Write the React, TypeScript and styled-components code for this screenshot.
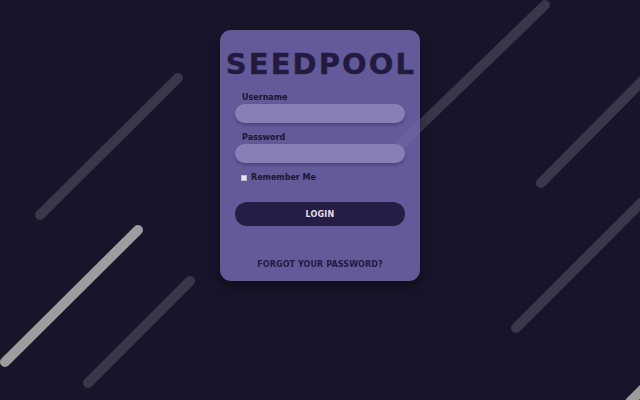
import React, { JSX } from 'react';
import styled, { createGlobalStyle } from 'styled-components';

const GlobalStyle = createGlobalStyle`
  html, body, #root {
    margin: 0;
    padding: 0;
    width: 100%;
    height: 100%;
  }
  body {
    background: #17152a;
    font-family: "DejaVu Sans", "Liberation Sans", sans-serif;
    overflow: hidden;
  }
`;

const Page = styled.div`
  position: relative;
  width: 640px;
  height: 400px;
  display: flex;
  justify-content: center;
  align-items: flex-start;
  padding-top: 30px;
  box-sizing: border-box;
`;

const Streaks = styled.svg`
  position: absolute;
  inset: 0;
  width: 640px;
  height: 400px;
`;

const Card = styled.form`
  position: relative;
  width: 200px;
  height: 251px;
  box-sizing: border-box;
  padding: 16px 15px 0;
  border-radius: 11px;
  background: rgba(117, 107, 181, 0.8);
  box-shadow: 0 5px 12px rgba(0, 0, 0, 0.45);
  display: flex;
  flex-direction: column;
`;

const Title = styled.h1`
  margin: 0 -15px 11px;
  padding-left: 2px;
  font-size: 29px;
  line-height: 36px;
  font-weight: 700;
  letter-spacing: 2.1px;
  text-align: center;
  color: #231a40;
  -webkit-text-stroke: 0.4px #231a40;
  white-space: nowrap;
`;

const Label = styled.label`
  display: block;
  padding-left: 7px;
  font-size: 8px;
  line-height: 10px;
  font-weight: 700;
  color: #1c1533;
`;

const Input = styled.input`
  display: block;
  width: 100%;
  height: 19px;
  box-sizing: border-box;
  margin: 1px 0 10px;
  border: none;
  outline: none;
  border-radius: 10px;
  background: #897fb6;
  box-shadow: 0 2px 3px rgba(20, 14, 40, 0.3);
`;

const CheckRow = styled.label`
  display: flex;
  align-items: center;
  gap: 4px;
  padding-left: 6px;
  font-size: 8px;
  line-height: 10px;
  font-weight: 700;
  color: #1c1533;
`;

const Box = styled.span`
  width: 6px;
  height: 6px;
  background: #e6e4ec;
  border: 0.5px solid #bdb8cc;
  box-sizing: border-box;
`;

const LoginButton = styled.button`
  margin-top: 19px;
  height: 24px;
  width: 100%;
  border: none;
  border-radius: 12px;
  background: #261d47;
  color: #e2deef;
  font-family: inherit;
  font-size: 8px;
  font-weight: 700;
  letter-spacing: 0.2px;
`;

const Forgot = styled.a`
  margin-top: 34px;
  text-align: center;
  font-size: 8px;
  line-height: 10px;
  font-weight: 700;
  letter-spacing: 0.1px;
  color: #231a40;
`;

type TStreak = { x1: number; y1: number; x2: number; y2: number; color: string };

const streaks: TStreak[] = [
  { x1: 40, y1: 215, x2: 178, y2: 78, color: '#3a3848' },
  { x1: 5, y1: 362, x2: 138, y2: 230, color: '#9d9d9d' },
  { x1: 88, y1: 383, x2: 190, y2: 281, color: '#3a3848' },
  { x1: 545, y1: 5, x2: 395, y2: 150, color: '#3a3848' },
  { x1: 541, y1: 183, x2: 645, y2: 78, color: '#3a3848' },
  { x1: 516, y1: 328, x2: 645, y2: 199, color: '#3a3848' },
  { x1: 630, y1: 402, x2: 645, y2: 387, color: '#9d9d9d' },
];

function App(): JSX.Element {
  return (
    <>
      <GlobalStyle />
      <Page>
        <Streaks viewBox="0 0 640 400">
          {streaks.map((s, i) =>
            <line key={i} x1={s.x1} y1={s.y1} x2={s.x2} y2={s.y2}
              stroke={s.color} strokeWidth={10} strokeLinecap="round" />
          )}
        </Streaks>
        <Card onSubmit={(e) => e.preventDefault()}>
          <Title>SEEDPOOL</Title>
          <Label>Username</Label>
          <Input type="text" />
          <Label>Password</Label>
          <Input type="password" />
          <CheckRow>
            <Box />
            Remember Me
          </CheckRow>
          <LoginButton type="submit">LOGIN</LoginButton>
          <Forgot>FORGOT YOUR PASSWORD?</Forgot>
        </Card>
      </Page>
    </>
  );
}

export default App;
